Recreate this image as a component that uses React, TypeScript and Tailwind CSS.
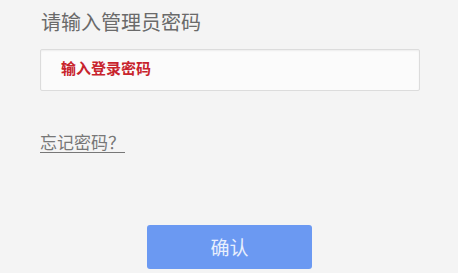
export default function App() {
  return (
    <div
      className="w-[458px] h-[273px] bg-[#f4f4f4] overflow-hidden"
      style={{ fontFamily: '"Noto Sans CJK SC", "Liberation Sans", sans-serif' }}
    >
      <div className="pl-[40px] pt-[9px] flex flex-col">
        <div className="text-[20px] leading-[26px] text-[#6a6a6a] pl-[1px]">请输入管理员密码</div>
        <div className="mt-[14px] w-[380px] h-[42px] bg-[#fbfbfb] border border-[#dcdcdc] rounded-[2px] shadow-[inset_0_1px_2px_rgba(0,0,0,0.06)] flex items-center pl-[20px]">
          <span className="text-[15px] font-bold text-[#c8232c] leading-none -mt-[5px]">输入登录密码</span>
        </div>
        <div className="mt-[39px] leading-[24px]">
          <a className="text-[17px] leading-[24px] text-[#777] underline underline-offset-[3px] decoration-[#777] cursor-pointer">忘记密码？</a>
        </div>
        <div className="mt-[71px] ml-[107px]">
          <button className="w-[165px] h-[44px] rounded-[3px] bg-[#6b99f2] text-[#e8effd] text-[19px] flex items-center justify-center">
            确认
          </button>
        </div>
      </div>
    </div>
  );
}
